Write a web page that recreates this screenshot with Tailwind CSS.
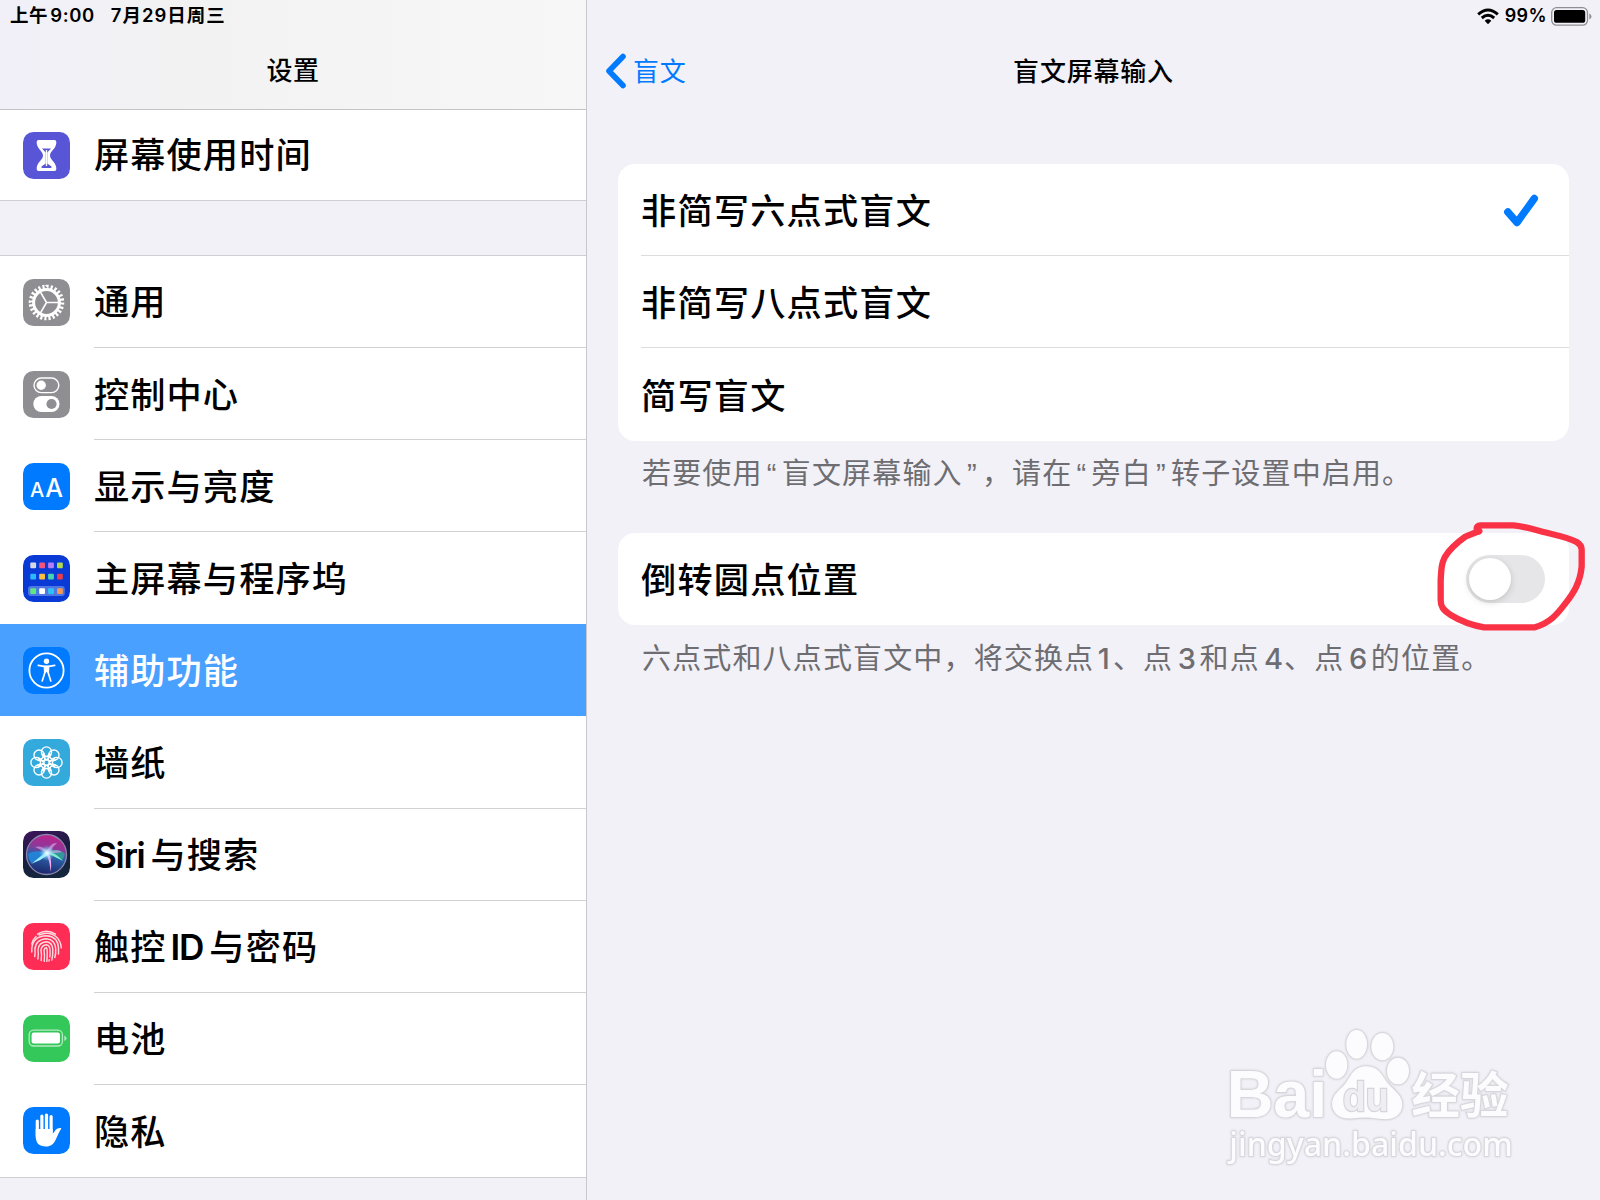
<!DOCTYPE html>
<html lang="zh-CN">
<head>
  <meta charset="UTF-8">
  <meta name="viewport" content="width=device-width, initial-scale=1.0">
  <title>设置</title>
  <script src="https://cdn.jsdelivr.net/npm/@tailwindcss/browser@4"></script>
</head>
<body class="relative w-[1600px] h-[1200px] overflow-hidden flex bg-[#f2f1f7] text-black font-medium font-['Inter','Noto_Sans_CJK_SC',sans-serif]">

  <!-- Sidebar -->
  <aside class="w-[587px] h-full shrink-0 border-r border-[#c9c9cd] flex flex-col overflow-hidden">
    <header class="h-[110px] shrink-0 border-b border-[#c4c4c7] bg-linear-to-r from-[#f1f0f9] via-[#f2f2f2] via-30% to-[#f7f7f7]">
      <div class="h-[31px] pl-[10px] flex items-center text-[18.5px] leading-none font-semibold tracking-[0.6px] whitespace-pre"><span>上午</span><span class="ml-[2px]">9:00</span><span class="ml-[16px] tracking-[1px]">7月29日周三</span></div>
      <h1 class="h-[79px] flex items-center justify-center text-[26px] leading-none tracking-[0.4px]">设置</h1>
    </header>

    <div class="h-[91px] shrink-0 bg-white border-b border-[#cfcfd3] flex items-center pl-[23px] text-[35.2px] tracking-[1.1px]">
      <svg class="size-[47px] shrink-0" viewBox="0 0 47 47">
        <rect width="47" height="47" rx="10.5" fill="#5856d6"/>
        <path d="M15.500 8 H31.500 Q33.500 8 33.300 11 C33 17 27 19 27 23.500 C27 28 33 30 33.300 36 Q33.500 39 31.500 39 H15.500 Q13.500 39 13.700 36 C14 30 20 28 20 23.500 C20 19 14 17 13.700 11 Q13.500 8 15.500 8Z" fill="#fff"/>
        <path d="M19 16.500 H28 L24.300 20.500 V31.500 L28.500 34.500 Q29 36 27.500 36 H19.500 Q18 36 18.500 34.500 L22.700 31.500 V20.500Z" fill="#5856d6"/>
        <path d="M23.500 18 V34" stroke="#fff" stroke-width="1.400"/>
      </svg>
      <span class="ml-[24px] pt-[1px]">屏幕使用时间</span>
    </div>

    <ul class="mt-[54px] shrink-0 bg-white border-y border-[#cfcfd3] text-[35.2px] leading-none tracking-[1.1px]">
      <li class="h-[92.1px] pl-[23px] flex items-center">
        <svg class="size-[47px] shrink-0" viewBox="0 0 47 47">
          <rect width="47" height="47" rx="10.5" fill="#8e8e93"/>
          <g fill="none" stroke="#fff">
            <circle cx="23.500" cy="23.500" r="15.600" stroke-width="4.400" pathLength="48" stroke-dasharray="1.050 0.950"/>
            <circle cx="23.500" cy="23.500" r="12.900" stroke-width="3"/>
            <path d="M23.500 23.500 H36 M23.500 23.500 L17.200 12.600 M23.500 23.500 L17.200 34.400" stroke-width="1.600"/>
          </g>
        </svg>
        <span class="ml-[24px] pt-[3px] flex-1 h-full flex items-center border-b border-[#d2d2d5]">通用</span>
      </li>
      <li class="h-[92.1px] pl-[23px] flex items-center">
        <svg class="size-[47px] shrink-0" viewBox="0 0 47 47">
          <rect width="47" height="47" rx="10.5" fill="#8e8e93"/>
          <rect x="11" y="7" width="24.800" height="14.600" rx="7.300" fill="none" stroke="#fff" stroke-width="1.400"/>
          <circle cx="18.200" cy="14.300" r="4.700" fill="#fff"/>
          <rect x="10.300" y="25" width="26.200" height="16" rx="8" fill="#fff"/>
          <circle cx="28.500" cy="33" r="5.100" fill="#8e8e93"/>
        </svg>
        <span class="ml-[24px] pt-[3px] flex-1 h-full flex items-center border-b border-[#d2d2d5]">控制中心</span>
      </li>
      <li class="h-[92.1px] pl-[23px] flex items-center">
        <span class="size-[47px] shrink-0 rounded-[10.5px] bg-[#007aff] text-white flex items-baseline justify-center leading-[50px] font-medium tracking-normal"><span class="text-[20px]">A</span><span class="ml-px text-[25px]">A</span></span>
        <span class="ml-[24px] pt-[3px] flex-1 h-full flex items-center border-b border-[#d2d2d5]">显示与亮度</span>
      </li>
      <li class="h-[92.1px] pl-[23px] flex items-center">
        <svg class="size-[47px] shrink-0" viewBox="0 0 47 47">
          <rect width="47" height="47" rx="10.5" fill="#0a3ad6"/>
          <rect x="5" y="31" width="36.800" height="10" rx="3" fill="#4f77e3"/>
          <rect x="7.300" y="7.500" width="5.800" height="5.800" rx="1" fill="#d5d9e2"/>
          <rect x="16.200" y="7.500" width="5.800" height="5.800" rx="1" fill="#f2557c"/>
          <rect x="25.100" y="7.500" width="5.800" height="5.800" rx="1" fill="#b77cf5"/>
          <rect x="34" y="7.500" width="5.800" height="5.800" rx="1" fill="#b4d84c"/>
          <rect x="7.300" y="18.800" width="5.800" height="5.800" rx="1" fill="#2bb9fb"/>
          <rect x="16.200" y="18.800" width="5.800" height="5.800" rx="1" fill="#f7c23a"/>
          <rect x="25.100" y="18.800" width="5.800" height="5.800" rx="1" fill="#45d3b0"/>
          <rect x="34" y="18.800" width="5.800" height="5.800" rx="1" fill="#ee3b45"/>
          <rect x="7.300" y="33.300" width="5.800" height="5.800" rx="1" fill="#5fe881"/>
          <rect x="16.200" y="33.300" width="5.800" height="5.800" rx="1" fill="#fff"/>
          <rect x="25.100" y="33.300" width="5.800" height="5.800" rx="1" fill="#2cc3fb"/>
          <rect x="34" y="33.300" width="5.800" height="5.800" rx="1" fill="#f7994f"/>
        </svg>
        <span class="ml-[24px] pt-[3px] flex-1 h-full flex items-center">主屏幕与程序坞</span>
      </li>
      <li class="h-[92.1px] pl-[23px] flex items-center bg-[#4aa0ff] text-white">
        <svg class="size-[47px] shrink-0" viewBox="0 0 47 47">
          <rect width="47" height="47" rx="10.5" fill="#007aff"/>
          <circle cx="23.500" cy="23.500" r="17.100" fill="none" stroke="#fff" stroke-width="1.800"/>
          <circle cx="23.500" cy="14.200" r="2.700" fill="#fff"/>
          <path d="M15.300 18.300 L21 19.300 H26 L31.700 18.300 M21.900 25.500 L19.200 34 M25.100 25.500 L27.800 34" fill="none" stroke="#fff" stroke-width="1.700" stroke-linecap="round" stroke-linejoin="round"/>
          <path d="M20.600 18.800 H26.400 L26 27 L23.500 25 L21 27Z" fill="#fff"/>
        </svg>
        <span class="ml-[24px] pt-[3px] flex-1 h-full flex items-center">辅助功能</span>
      </li>
      <li class="h-[92.1px] pl-[23px] flex items-center">
        <svg class="size-[47px] shrink-0" viewBox="0 0 47 47">
          <rect width="47" height="47" rx="10.5" fill="#34aadc"/>
          <g transform="translate(23.500 23.500)" fill="none" stroke="#fff" stroke-width="1.350">
            <g id="petals">
              <path id="petal" d="M0 -2.800 C-2.500 -4.500 -5.100 -7.500 -5.100 -10.500 A5.100 5.100 0 0 1 5.100 -10.500 C5.100 -7.500 2.500 -4.500 0 -2.800Z M-4.800 -8.800 Q-3 -6 0 -6 Q3 -6 4.800 -8.800"/>
              <use href="#petal" transform="rotate(45)"/>
              <use href="#petal" transform="rotate(90)"/>
              <use href="#petal" transform="rotate(135)"/>
            </g>
            <use href="#petals" transform="rotate(180)"/>
            <circle r="2.800"/>
          </g>
        </svg>
        <span class="ml-[24px] pt-[3px] flex-1 h-full flex items-center border-b border-[#d2d2d5]">墙纸</span>
      </li>
      <li class="h-[92.1px] pl-[23px] flex items-center">
        <svg class="size-[47px] shrink-0" viewBox="0 0 47 47">
          <defs>
            <linearGradient id="siriBack" x1="0" y1="0" x2="0.300" y2="1">
              <stop offset="0" stop-color="#40145c"/><stop offset="0.500" stop-color="#1c1c42"/><stop offset="1" stop-color="#14263c"/>
            </linearGradient>
            <linearGradient id="siriOrb" x1="0.600" y1="0" x2="0.400" y2="1">
              <stop offset="0" stop-color="#c0208a"/><stop offset="0.350" stop-color="#8a3a9a"/><stop offset="0.550" stop-color="#2b5fa8"/><stop offset="1" stop-color="#1b2468"/>
            </linearGradient>
            <radialGradient id="siriCore">
              <stop offset="0" stop-color="#fff"/><stop offset="0.300" stop-color="#bff4ff" stop-opacity="0.800"/><stop offset="1" stop-color="#5cc8ff" stop-opacity="0"/>
            </radialGradient>
          </defs>
          <rect width="47" height="47" rx="10.5" fill="url(#siriBack)"/>
          <circle cx="23.500" cy="23.500" r="20" fill="url(#siriOrb)" stroke="#8b86ac" stroke-width="1.300"/>
          <path d="M26 20 Q36 17 42 23 Q41 27 39 29 Q31 26 26 20Z" fill="#2f9f9a" opacity="0.900"/>
          <path d="M22 21 Q10 19 5 23 Q5 28 8 32 Q16 28 22 21Z" fill="#2486d9" opacity="0.900"/>
          <path d="M12 16 Q19 14 24 20 Q28 11 34 12 Q30 15 28 20 Q36 18 39 21 Q33 22 27 23Z" fill="#dca5e8" opacity="0.650"/>
          <path d="M23 21 L8 33 Q17 30 25 24Z" fill="#9ff3ff"/>
          <path d="M24 22 L40 30 Q33 22 26 21Z" fill="#7df2c8"/>
          <path d="M23 22 Q27 30 27.500 41 Q29.500 31 26 22Z" fill="#f3a6ea"/>
          <circle cx="24" cy="22" r="8" fill="url(#siriCore)"/>
        </svg>
        <span class="ml-[24px] pt-[3px] flex-1 h-full flex items-center border-b border-[#d2d2d5]"><span class="font-semibold tracking-[-1.3px]">Siri</span><span class="ml-[6px]">与搜索</span></span>
      </li>
      <li class="h-[92.1px] pl-[23px] flex items-center">
        <svg class="size-[47px] shrink-0" viewBox="0 0 47 47">
          <rect width="47" height="47" rx="10.5" fill="#ff2d55"/>
          <g fill="none" stroke="#ffd9e0" stroke-width="1.450" stroke-linecap="round">
            <path d="M14.500 11.200 Q23.500 5.500 32.500 11.200"/>
            <path d="M8.800 21 Q9.800 16.500 13 13.500 M16 12 Q26.500 7.500 34 14.500 Q38 19 38.300 25"/>
            <path d="M8.800 29 V25.500 Q9.800 13.200 23.500 12.800 Q34.800 13.500 35.500 25 V31"/>
            <path d="M11.700 33.500 Q12.500 30 11.900 26.500 Q12.500 16.300 23.500 15.700 Q32 16.500 32.700 25.500 Q33 31 31.800 34.500"/>
            <path d="M14.900 36 Q15.700 31 15 27 Q15.500 19.300 23.500 18.700 Q29.500 19.500 29.800 26.500 Q30 33 28.800 37"/>
            <path d="M18.200 37.500 Q18.900 31 18 27 Q18.500 22.300 23.500 21.700 Q27 22.500 27 27 Q27.300 31 26.800 34 M26.200 36.800 L26 38"/>
            <path d="M21.200 38.300 Q21.900 32 21 27.500 Q21.500 24.800 23.500 24.800 Q24.200 25.500 24.200 28 Q24.500 34 23.800 38.300"/>
          </g>
        </svg>
        <span class="ml-[24px] pt-[3px] flex-1 h-full flex items-center border-b border-[#d2d2d5]">触控<span class="ml-[4px] font-semibold tracking-[-1.2px]">ID</span><span class="ml-[6px]">与密码</span></span>
      </li>
      <li class="h-[92.1px] pl-[23px] flex items-center">
        <svg class="size-[47px] shrink-0" viewBox="0 0 47 47">
          <rect width="47" height="47" rx="10.5" fill="#34c759"/>
          <rect x="6.200" y="15.200" width="33.200" height="15.800" rx="4.500" fill="none" stroke="#b5eac2" stroke-width="1.300"/>
          <rect x="8.600" y="17.600" width="28.400" height="11" rx="2.300" fill="#fff"/>
          <path d="M41.300 20.500 Q43.500 21.500 43.500 23.200 Q43.500 25 41.300 26Z" fill="#b5eac2"/>
        </svg>
        <span class="ml-[24px] pt-[3px] flex-1 h-full flex items-center border-b border-[#d2d2d5]">电池</span>
      </li>
      <li class="h-[92.1px] pl-[23px] flex items-center">
        <svg class="size-[47px] shrink-0" viewBox="0 0 47 47">
          <rect width="47" height="47" rx="10.5" fill="#007aff"/>
          <path d="M14.300 14 V29 M18.900 9 V25 M23.500 8 V25 M28.100 9.500 V25" stroke="#fff" stroke-width="3.200" stroke-linecap="round"/>
          <path d="M12.700 22 H29.700 V26.500 Q31.500 25 32.500 23 Q34.500 20.600 38 21 Q38.600 21.600 37.600 22.700 C35.500 25.500 34.800 28.500 33 32 C30.500 37.500 28 39.500 23 39.500 C16 39.500 12.700 36 12.700 29Z" fill="#fff"/>
        </svg>
        <span class="ml-[24px] pt-[3px] flex-1 h-full flex items-center">隐私</span>
      </li>
    </ul>
  </aside>

  <!-- Detail pane -->
  <main class="flex-1 flex flex-col">
    <div class="h-8 shrink-0 pr-[8px] flex items-center justify-end text-[18px] leading-none font-semibold">
      <svg class="w-[22px] h-[17px] mr-[6px]" viewBox="0 0 22 17">
        <g fill="none" stroke="#000" stroke-width="3">
          <path d="M1.200 6.300 Q11 -2.200 20.800 6.300"/>
          <path d="M4.800 10 Q11 4.600 17.200 10"/>
        </g>
        <path d="M7.700 12.700 Q11 10 14.300 12.700 L11 16.200Z"/>
      </svg>
      <span class="tracking-[0.4px]">99%</span>
      <svg class="w-[41px] h-[19px] ml-[4px]" viewBox="0 0 41 19">
        <rect x="0.700" y="0.700" width="35.800" height="17.400" rx="4.800" fill="none" stroke="#8f8f93" stroke-width="1.300"/>
        <rect x="3" y="3" width="31.200" height="12.800" rx="2.600"/>
        <path d="M38.300 6.500 Q40.500 7.500 40.500 9.500 Q40.500 11.500 38.300 12.500Z" fill="#8f8f93"/>
      </svg>
    </div>
    <nav class="h-[78px] shrink-0 grid grid-cols-3 items-center text-[26px] leading-none tracking-[0.8px]">
      <a class="pl-[18px] flex items-center font-normal text-[#007aff]">
        <svg class="w-[21px] h-[36px]" viewBox="0 0 21 36"><path d="M18 3.500 L4 18 L18 32.500" fill="none" stroke="#007aff" stroke-width="5.600" stroke-linecap="round" stroke-linejoin="round"/></svg>
        <span class="ml-[7px] pt-px">盲文</span>
      </a>
      <h2 class="text-center pt-px">盲文屏幕输入</h2>
    </nav>

    <section class="mt-[54px] ml-[31px] w-[951px] h-[276.5px] shrink-0 pl-[23px] rounded-[17px] bg-white text-[35.2px] leading-none tracking-[1.2px]">
      <div class="h-[92.3px] pt-[2px] pr-[30px] flex items-center justify-between border-b border-[#dcdcdf]">
        <span class="pt-[2px]">非简写六点式盲文</span>
        <svg class="w-[36px] h-[34px]" viewBox="0 0 36 34"><path d="M4.800 18 L14 28.500 L31.300 4.500" fill="none" stroke="#007aff" stroke-width="7.400" stroke-linecap="round" stroke-linejoin="round"/></svg>
      </div>
      <div class="h-[92.1px] pt-[4px] flex items-center border-b border-[#dcdcdf]">非简写八点式盲文</div>
      <div class="h-[92.1px] pt-[4px] flex items-center">简写盲文</div>
    </section>
    <p class="ml-[55px] h-[92.5px] shrink-0 pt-[18px] text-[29px] leading-[30px] font-normal tracking-[1.15px] text-[#6d6d72]">若要使用<span class="font-['Liberation_Sans'] mx-[4.2px]">“</span>盲文屏幕输入<span class="font-['Liberation_Sans'] mx-[4.2px]">”</span>，请在<span class="font-['Liberation_Sans'] mx-[4.2px]">“</span>旁白<span class="font-['Liberation_Sans'] mx-[4.2px]">”</span>转子设置中启用。</p>

    <section class="ml-[31px] w-[951px] h-[92px] shrink-0 pl-[23px] pr-[24px] rounded-[17px] bg-white flex items-center justify-between text-[35.2px] leading-none tracking-[1.2px]">
      <span class="pt-[3px]">倒转圆点位置</span>
      <span class="w-[79.5px] h-[48px] rounded-full bg-[#e6e6e8] flex items-center pl-[3px]"><span class="size-[42.5px] rounded-full bg-white shadow-[0_2px_7px_rgba(0,0,0,0.16)]"></span></span>
    </section>
    <p class="ml-[55px] shrink-0 pt-[19px] text-[29px] leading-[30px] font-normal tracking-[1.15px] text-[#6d6d72]">六点式和八点式盲文中，将交换点<span class="ml-[3.5px] mr-[2px] font-medium">1</span>、点<span class="ml-[4.5px] mr-[2.5px] font-medium">3</span>和点<span class="ml-[4px] font-medium">4</span>、点<span class="ml-[4.5px] mr-[2.5px] font-medium">6</span>的位置。</p>
  </main>

  <!-- Hand-drawn ring around the switch -->
  <svg class="absolute left-[1400px] top-[500px] w-[200px] h-[190px]" viewBox="0 0 600 570">
    <path d="M236 95 L230 86 Q230 77 242 76 L340 76 C375 79 400 88 430 96 C470 106 505 112 530 126 Q546 136 545 150 L545 200 C540 250 520 280 498 308 C470 345 450 368 405 382 L252 382 C215 376 180 362 152 345 C128 328 122 320 122 300 L122 240 C124 205 125 190 134 172 C150 145 175 125 196 110 L238 93" fill="none" stroke="#f93345" stroke-width="19" stroke-linecap="round" stroke-linejoin="round"/>
  </svg>

  <!-- Watermark -->
  <svg class="absolute left-[1200px] top-[1000px] w-[340px] h-[190px] drop-shadow-[0_0_1px_rgba(0,0,0,0.15)]" viewBox="0 0 1020 570">
    <g fill="#fcfcfe" stroke="#d5d5da" stroke-width="5" paint-order="stroke">
      <text x="80" y="352" textLength="302" lengthAdjust="spacingAndGlyphs" font-family="Liberation Sans" font-weight="bold" font-size="202">Bai</text>
      <ellipse cx="410" cy="195" rx="32" ry="41"/>
      <ellipse cx="470" cy="133" rx="31" ry="43"/>
      <ellipse cx="547" cy="140" rx="33" ry="41"/>
      <ellipse cx="594" cy="213" rx="33" ry="40"/>
      <path d="M500 199 C535 199 545 225 562 248 C580 270 608 285 607 315 C605 350 575 360 545 357 C515 353 490 350 460 355 C420 360 397 340 396 312 C396 280 425 268 440 245 C455 222 465 199 500 199Z"/>
      <text x="428" y="332" textLength="138" lengthAdjust="spacingAndGlyphs" font-family="Liberation Sans" font-weight="bold" font-size="120" fill="#efeff3" stroke-width="7">du</text>
      <text x="634" y="339" textLength="292" lengthAdjust="spacingAndGlyphs" font-family="Noto Sans CJK SC" font-weight="bold" font-size="148">经验</text>
      <text x="88" y="467" textLength="850" lengthAdjust="spacingAndGlyphs" font-family="Noto Sans" font-size="98">jingyan.baidu.com</text>
    </g>
  </svg>
</body>
</html>
